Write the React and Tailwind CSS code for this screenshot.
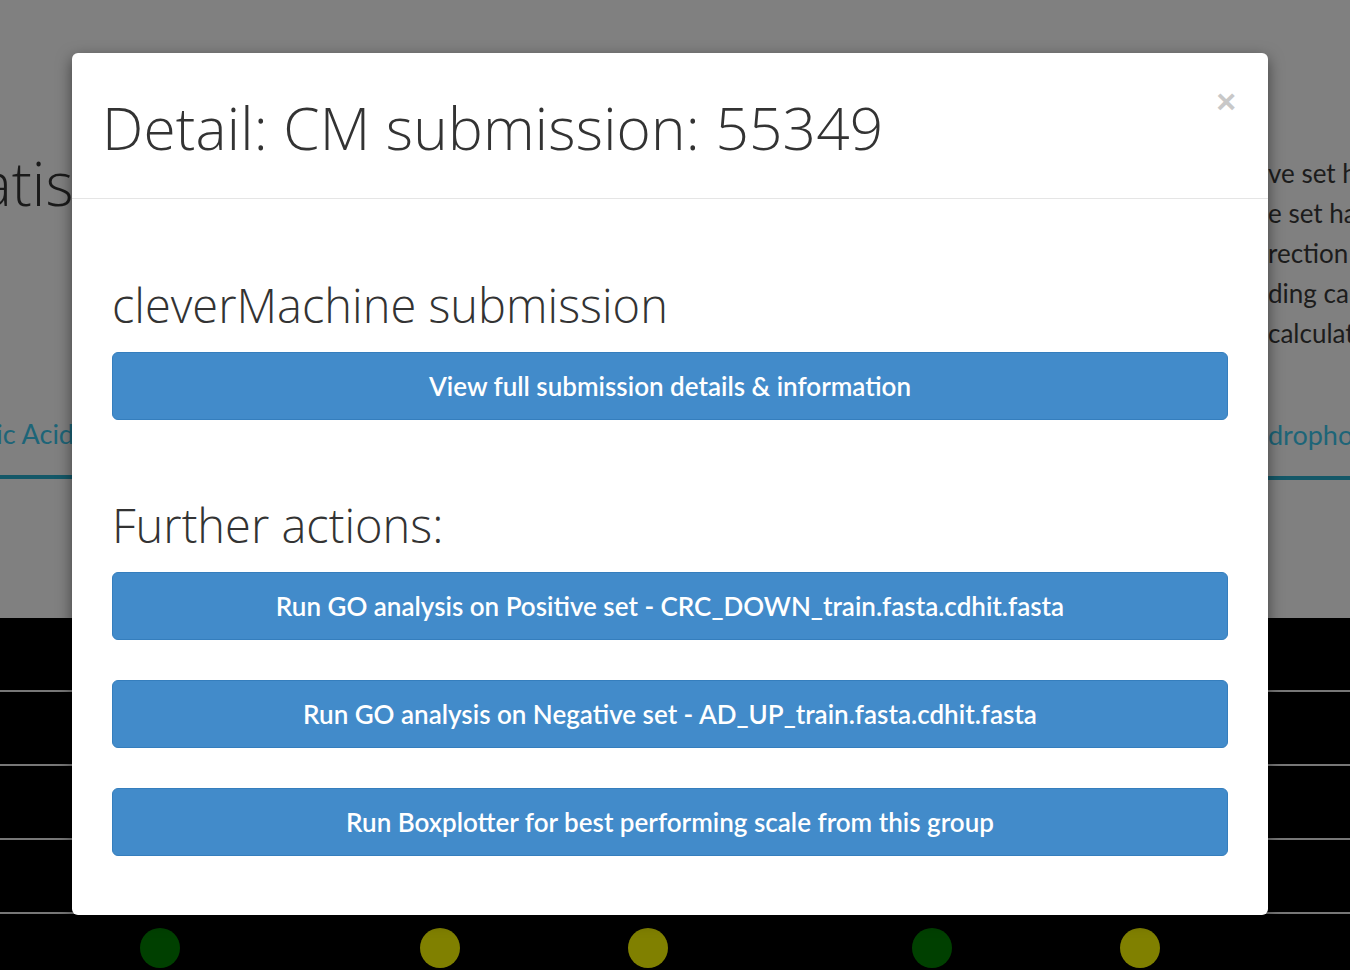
import React from 'react';

const actions = [
  'Run GO analysis on Positive set - CRC_DOWN_train.fasta.cdhit.fasta',
  'Run GO analysis on Negative set - AD_UP_train.fasta.cdhit.fasta',
  'Run Boxplotter for best performing scale from this group',
];

const sideLines = ['ve set has', 'e set has', 'rection', 'ding calc', 'calculat'];

function ActionButton({ children }) {
  return (
    <button className="w-full h-[68px] rounded-md border border-[#357ebd] bg-[#428bca] text-white text-[26px] font-semibold font-['Lato',sans-serif]">
      {children}
    </button>
  );
}

export default function App() {
  return (
    <div className="relative w-[1350px] h-[970px] overflow-hidden font-['Open_Sans',sans-serif]">
      {/* page behind the dimmed backdrop */}
      <div className="flex flex-col h-full">
        <div className="h-[618px] bg-[#808080] flex justify-between">
          <div className="w-[72px] overflow-hidden flex flex-col">
            <div className="flex mt-[148px] h-[70px] items-center">
              <span className="whitespace-nowrap text-[60px] text-[#1a1a1a] font-light -ml-[20px]">atistics</span>
            </div>
            <div className="flex justify-end mt-[196px]">
              <span className="whitespace-nowrap text-[27px] text-[#1d6578] font-['Lato',sans-serif] -mr-[2px]">Acidic Acid</span>
            </div>
            <div className="mt-[20px] h-[4px] w-full bg-[#145868]" />
          </div>
          <div className="w-[82px] overflow-hidden flex flex-col">
            <div className="mt-[153px] flex flex-col">
              {sideLines.map(l => (
                <span key={l} className="whitespace-nowrap text-[26px] leading-[40px] text-[#1c1c1c] font-['Lato',sans-serif]">{l}</span>
              ))}
            </div>
            <span className="whitespace-nowrap mt-[62px] text-[27px] text-[#1d6578] font-['Lato',sans-serif]">drophobic</span>
            <div className="mt-[20px] h-[4px] w-full bg-[#145868]" />
          </div>
        </div>
        <div className="flex-1 bg-black flex flex-col">
          {[0, 1, 2, 3].map(i => (
            <div key={i} className="h-[74px] border-b-2 border-[#777]" />
          ))}
          <div className="flex pt-[14px]">
            <div className="ml-[140px] w-10 h-10 rounded-full bg-[#004000]" />
            <div className="ml-[240px] w-10 h-10 rounded-full bg-[#808000]" />
            <div className="ml-[168px] w-10 h-10 rounded-full bg-[#808000]" />
            <div className="ml-[244px] w-10 h-10 rounded-full bg-[#004000]" />
            <div className="ml-[168px] w-10 h-10 rounded-full bg-[#808000]" />
          </div>
        </div>
      </div>

      {/* modal */}
      <div className="absolute inset-0 flex justify-start pl-[72px] pt-[53px]">
        <div className="w-[1196px] h-[862px] bg-white rounded-md shadow-[0_5px_15px_rgba(0,0,0,0.5)] flex flex-col">
          <div className="h-[146px] border-b border-[#e5e5e5] pl-[30px] pr-8 flex justify-between">
            <h4 className="mt-[38px] text-[58.5px] leading-[72px] font-light text-[#333] tracking-[0.2px]">
              Detail: CM submission: 55349
            </h4>
            <span className="mt-[30px] text-[34px] leading-[36px] font-bold text-[#c8c8c8] font-['Liberation_Sans',sans-serif]">×</span>
          </div>
          <div className="px-10 flex flex-col">
            <h3 className="mt-[76px] h-[60px] leading-[60px] text-[47px] font-light text-[#333]">cleverMachine submission</h3>
            <div className="mt-[17px]">
              <ActionButton>View full submission details &amp; information</ActionButton>
            </div>
            <h3 className="mt-[75px] h-[60px] leading-[60px] text-[47px] font-light text-[#333]">Further actions:</h3>
            <div className="mt-[17px] flex flex-col gap-10">
              {actions.map(a => (
                <ActionButton key={a}>{a}</ActionButton>
              ))}
            </div>
          </div>
        </div>
      </div>
    </div>
  );
}
